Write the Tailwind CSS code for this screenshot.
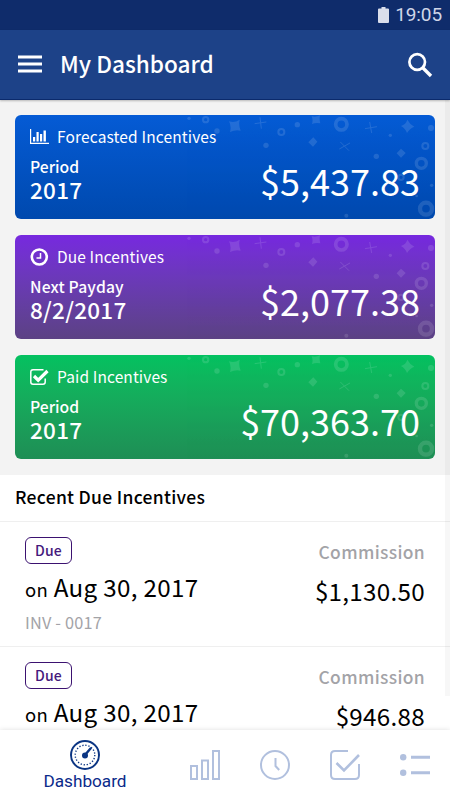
<!DOCTYPE html>
<html lang="en">
<head>
    <meta charset="UTF-8">
    <meta name="viewport" content="width=device-width, initial-scale=1.0">
    <title>My Dashboard</title>
    <script src="https://cdn.jsdelivr.net/npm/@tailwindcss/browser@4"></script>
</head>
<body class="bg-[#f3f3f3] font-['Noto_Sans_CJK_SC',sans-serif]">

    <!-- Confetti pattern shared by the cards -->
    <svg class="hidden">
        <symbol id="confetti" viewBox="0 0 420 103">
            <g transform="translate(210 -10) scale(.33333)" fill="#fff">
                <path d="M12 49Q30 54 44 44Q40 61 47 77Q30 74 15 81Q20 64 12 49ZM260 34Q273 38 285 31Q282 43 286 55Q272 52 261 57Q265 45 260 34ZM265 97L277 110L264 125L250 112ZM547 44Q554 58 568 65Q554 70 546 84Q541 70 528 63Q543 58 547 44ZM528 131L542 144L528 158L515 145Z"/>
                <path d="M105 37L109 71M89 56L124 51M434 51L440 84M420 71L456 65M346 111L372 137M343 132L375 114" stroke="#fff" stroke-width="3"/>
                <circle cx="-108" cy="40" r="5"/><circle cx="-24" cy="78" r="8"/><circle cx="123" cy="121" r="8"/>
                <circle cx="217" cy="59" r="8"/><circle cx="454" cy="154" r="8"/><circle cx="496" cy="91" r="5"/>
                <circle cx="618" cy="69" r="9"/><circle cx="364" cy="332" r="6"/><circle cx="620" cy="241" r="5"/><circle cx="575" cy="273" r="4"/>
                <g fill="none" stroke="#fff">
                    <circle cx="-58" cy="44" r="8" stroke-width="6"/><circle cx="169" cy="81" r="9" stroke-width="6"/>
                    <circle cx="349" cy="58" r="17" stroke-width="11"/><circle cx="601" cy="123" r="9" stroke-width="6"/>
                    <circle cx="589" cy="175" r="15" stroke-width="10"/><circle cx="528" cy="217" r="8" stroke-width="6"/>
                    <circle cx="603" cy="311" r="18" stroke-width="13"/>
                </g>
            </g>
        </symbol>
    </svg>

    <div class="relative flex flex-col w-[450px] h-[800px] overflow-hidden">

        <!-- Status bar -->
        <div class="flex items-center justify-end h-[30px] shrink-0 pr-2 gap-[6px] bg-[#0f2c6b] text-[#cfd6e8]">
            <svg class="w-[11px] h-4" viewBox="0 0 11 16" fill="#dadeeb"><path d="M3.5 0h4v1.5H10q1 0 1 1V15q0 1-1 1H1q-1 0-1-1V2.500q0-1 1-1h2.500z"/></svg>
            <span class="font-[Roboto] text-[19px] leading-[32px] tracking-[-0.1px]">19:05</span>
        </div>

        <!-- Header -->
        <header class="relative z-10 flex items-center h-[70px] shrink-0 pl-[18px] pr-[17px] bg-[#1d4288] border-b border-[#0b2a6c] shadow-[0_1px_2px_rgba(0,0,0,0.25)]">
            <svg class="w-6 h-[18px] -mt-px" viewBox="0 0 24 18" fill="#fff"><path d="M0 .5h24v3H0zM0 7.500h24v3H0zM0 14.500h24v3H0z"/></svg>
            <h1 class="ml-[18px] -mt-[2px] text-[22.600px] leading-8 font-medium text-white">My Dashboard</h1>
            <svg class="ml-auto w-[26px] h-[26px]" viewBox="0 0 26 26" fill="none" stroke="#fff"><circle cx="10.200" cy="10" r="7.800" stroke-width="2.700"/><path d="M15.500 15.500L24 24" stroke-width="3.400"/></svg>
        </header>

        <!-- Summary cards -->
        <main class="flex flex-col gap-[16.5px] h-[375px] shrink-0 px-[15px] pt-[15px] text-white">
            <section class="relative flex justify-between h-[103.5px] px-[15px] rounded-md overflow-hidden bg-linear-to-b from-[#055bd5] to-[#0049ae]">
                <svg class="absolute left-0 top-0 w-[420px] h-[103px] opacity-12"><use href="#confetti"/></svg>
                <div class="relative pt-[10px]">
                    <div class="flex items-center gap-[8px] h-[22px] text-[15.500px] leading-[22px] tracking-[0.15px]">
                        <svg class="w-[19px] h-[15px] mt-px" viewBox="0 0 19 15" fill="#fff"><path d="M0 0h1.200v13.700H19V15H0zM3 8h2.200v4.500H3zM6.500 3h2.200v9.500H6.500zM10 5h2.200v7.500H10zM13.500 1.500h2.400v11h-2.400z"/></svg>
                        <span>Forecasted Incentives</span>
                    </div>
                    <p class="mt-[9px] text-[15.700px] leading-[22px] font-medium">Period</p>
                    <p class="-mt-px text-[22.500px] leading-6 tracking-[0.25px] font-medium">2017</p>
                </div>
                <p class="relative pt-[40px] text-[36px] leading-[50px]">$5,437.83</p>
            </section>

            <section class="relative flex justify-between h-[103.5px] px-[15px] rounded-md overflow-hidden bg-linear-to-b from-[#7728df] to-[#5c4184]">
                <svg class="absolute left-0 top-0 w-[420px] h-[103px] opacity-12"><use href="#confetti"/></svg>
                <div class="relative pt-[10px]">
                    <div class="flex items-center gap-[8px] h-[22px] text-[15.500px] leading-[22px] tracking-[0.1px]">
                        <svg class="w-[19px] h-[18px] mt-[2px]" viewBox="0 0 19 18" fill="none" stroke="#fff"><circle cx="9.300" cy="9" r="7.500" stroke-width="2.600"/><path d="M10.500 5v5H6.500" stroke-width="1.500"/></svg>
                        <span>Due Incentives</span>
                    </div>
                    <p class="mt-[9px] text-[15.700px] leading-[22px] tracking-[0.15px] font-medium">Next Payday</p>
                    <p class="-mt-px text-[22.500px] leading-6 tracking-[0.25px] font-medium">8/2/2017</p>
                </div>
                <p class="relative pt-[40px] text-[36px] leading-[50px]">$2,077.38</p>
            </section>

            <section class="relative flex justify-between h-[103.5px] px-[15px] rounded-md overflow-hidden bg-linear-to-b from-[#03c160] to-[#1e8e55]">
                <svg class="absolute left-0 top-0 w-[420px] h-[103px] opacity-12"><use href="#confetti"/></svg>
                <div class="relative pt-[10px]">
                    <div class="flex items-center gap-[8px] h-[22px] text-[15.500px] leading-[22px] tracking-[0.12px]">
                        <svg class="w-[19px] h-[16px] mt-px" viewBox="0 0 19 16" fill="none" stroke="#fff"><path d="M13.500 .8H3Q.8.800.8 3v10Q.8 15.200 3 15.200h10q2.200 0 2.200-2.200V9.500" stroke-width="1.500"/><path d="M4 7l4.200 4.200L17.500 2" stroke-width="3.200"/></svg>
                        <span>Paid Incentives</span>
                    </div>
                    <p class="mt-[9px] text-[15.700px] leading-[22px] font-medium">Period</p>
                    <p class="-mt-px text-[22.500px] leading-6 tracking-[0.25px] font-medium">2017</p>
                </div>
                <p class="relative pt-[40px] text-[36px] leading-[50px]">$70,363.70</p>
            </section>
        </main>

        <!-- Recent incentives -->
        <section class="flex-1 min-h-0 overflow-hidden bg-white text-black">
            <h2 class="h-[46px] pl-[15px] text-[17.500px] leading-[43px] tracking-[0.3px] font-medium">Recent Due Incentives</h2>
            <div class="flex justify-between h-[125px] px-[25px] border-t border-[#efefef]">
                <div class="pt-[15px]">
                    <span class="block w-[47px] h-[27px] border border-[#3b1270] rounded-md text-center text-[14px] leading-[24px] tracking-[0.2px] font-medium text-[#45197c]">Due</span>
                    <p class="mt-[6px] text-[24.200px] leading-[34px] tracking-[0.32px]"><span class="text-[18.500px] tracking-[0.2px]">on</span> Aug 30, 2017</p>
                    <p class="mt-[5px] text-[16.300px] leading-[22px] tracking-[0.2px] text-[#a3a3a7]">INV - 0017</p>
                </div>
                <div class="pt-[18px] text-right">
                    <p class="text-[17.400px] leading-[24px] tracking-[0.35px] font-medium text-[#a3a3a7]">Commission</p>
                    <p class="mt-[10px] text-[24.200px] leading-[34px] tracking-[0.3px]">$1,130.50</p>
                </div>
            </div>
            <div class="flex justify-between h-[125px] px-[25px] border-t border-[#efefef]">
                <div class="pt-[15px]">
                    <span class="block w-[47px] h-[27px] border border-[#3b1270] rounded-md text-center text-[14px] leading-[24px] tracking-[0.2px] font-medium text-[#45197c]">Due</span>
                    <p class="mt-[6px] text-[24.200px] leading-[34px] tracking-[0.32px]"><span class="text-[18.500px] tracking-[0.2px]">on</span> Aug 30, 2017</p>
                </div>
                <div class="pt-[18px] text-right">
                    <p class="text-[17.400px] leading-[24px] tracking-[0.35px] font-medium text-[#a3a3a7]">Commission</p>
                    <p class="mt-[10px] text-[24.200px] leading-[34px] tracking-[0.3px]">$946.88</p>
                </div>
            </div>
        </section>

        <!-- Scrollbar -->
        <div class="absolute right-0 top-[100px] w-[5px] h-[596px] bg-black/3"></div>

        <!-- Tab bar -->
        <nav class="relative flex items-center h-[70px] shrink-0 bg-white shadow-[0_0_5px_rgba(0,0,0,0.13)]">
            <a class="flex flex-col items-center w-[170px] h-full pt-[10px] text-[#0b2a8a]">
                <svg class="w-[30px] h-[30px]" viewBox="0 0 30 30" fill="none" stroke="#0b3583">
                    <circle cx="15" cy="15" r="14" stroke-width="2"/>
                    <circle cx="15" cy="15" r="9.800" stroke-width="1.400" stroke-dasharray="1.300 1.780"/>
                    <path d="M15 15L20.500 8.500" stroke-width="2.400" stroke-linecap="round"/>
                    <circle cx="15" cy="15.500" r="3" fill="#0b3583" stroke="none"/>
                </svg>
                <span class="font-[Roboto] text-[17.200px] leading-[22px]">Dashboard</span>
            </a>
            <div class="flex items-center gap-10 pl-5">
                <svg class="w-[30px] h-[30px]" viewBox="0 0 30 30" fill="none" stroke="#b1c0de" stroke-width="2"><path d="M1 16h6v13H1zM12 10.500h6V29h-6zM23 1h6v28h-6z"/></svg>
                <svg class="w-[30px] h-[30px]" viewBox="0 0 30 30" fill="none" stroke="#b1c0de" stroke-width="2"><circle cx="15" cy="15" r="14"/><path d="M15.500 8v8l3.700 4"/></svg>
                <svg class="w-[30px] h-[30px]" viewBox="0 0 30 30" fill="none" stroke="#b1c0de" stroke-width="2"><path d="M18 1H5Q1 1 1 5v20q0 4 4 4h20q4 0 4-4V14"/><path d="M6.500 13l7.500 7.500L29 5" stroke-width="2.600"/></svg>
                <svg class="w-[30px] h-[30px]" viewBox="0 0 30 30" fill="#b1c0de"><circle cx="3.200" cy="7.200" r="3.200"/><circle cx="3.200" cy="22.800" r="3.200"/><path d="M11 5.700h19v3H11zM11 21.300h19v3H11z"/></svg>
            </div>
        </nav>
    </div>

</body>
</html>
